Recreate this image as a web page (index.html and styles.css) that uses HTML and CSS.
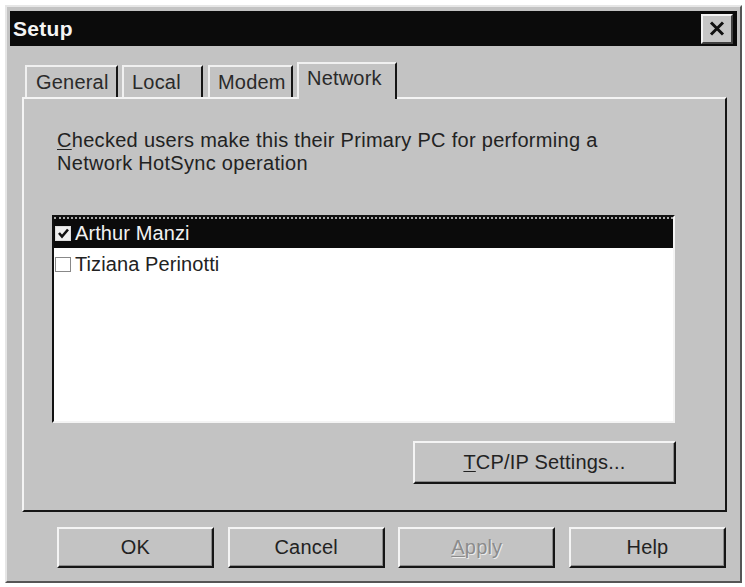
FILE: index.html
```html
<!DOCTYPE html>
<html>
<head>
<meta charset="utf-8">
<link rel="stylesheet" href="styles.css">
</head>
<body>
<div class="dialog">
  <div class="titlebar">
    <span class="title">Setup</span>
    <div class="close">
      <svg width="16" height="15" viewBox="0 0 16 15"><path d="M2 1.5 L14 13.5 M14 1.5 L2 13.5" stroke="#111" stroke-width="3" fill="none"/></svg>
    </div>
  </div>
  <div class="body">
    <div class="tabs">
      <div class="tab t-general">General</div>
      <div class="tab t-local">Local</div>
      <div class="tab t-modem">Modem</div>
      <div class="tab t-network active">Network</div>
    </div>
    <div class="panel">
      <p class="desc"><u>C</u>hecked users make this their Primary PC for performing a<br>Network HotSync operation</p>
      <div class="listbox">
        <div class="row sel">
          <span class="cb checked"><svg width="13" height="13" viewBox="0 0 13 13"><path d="M2 6 L5 9.5 L11 2.5" stroke="#111" stroke-width="2.6" fill="none"/></svg></span>
          <span>Arthur Manzi</span>
        </div>
        <div class="row">
          <span class="cb"></span>
          <span>Tiziana Perinotti</span>
        </div>
      </div>
      <div class="btn-row">
        <div class="btn tcp"><span><u>T</u>CP/IP Settings...</span></div>
      </div>
    </div>
    <div class="footer">
      <div class="btn">OK</div>
      <div class="btn">Cancel</div>
      <div class="btn disabled"><span><u>A</u>pply</span></div>
      <div class="btn">Help</div>
    </div>
  </div>
</div>
</body>
</html>
```
FILE: styles.css
```css
body {
  margin: 0;
  background: #fff;
  font-family: "Liberation Sans", Arial, sans-serif;
}
.dialog {
  margin: 5px 0 0 5px;
  width: 737px;
  box-sizing: border-box;
  background: #c3c3c3;
  border: 2px solid;
  border-color: #e6e6e6 #555 #555 #e6e6e6;
  padding: 4px 3px 13px;
}
.titlebar {
  height: 35px;
  background: #0b0b0b;
  display: flex;
  align-items: center;
  justify-content: space-between;
  padding: 0 4px 0 3px;
}
.title {
  color: #f4f4f4;
  font-weight: bold;
  font-size: 21px;
  letter-spacing: 0.3px;
}
.close {
  width: 32px;
  height: 30px;
  box-sizing: border-box;
  background: #c6c6c6;
  border: 2px solid;
  border-color: #f4f4f4 #404040 #404040 #f4f4f4;
  display: flex;
  align-items: center;
  justify-content: center;
}
.body {
  padding: 16px 10px 0 12px;
}
.tabs {
  display: flex;
  align-items: flex-end;
  padding-left: 3px;
  height: 35px;
}
.tab {
  height: 32px;
  box-sizing: border-box;
  border: 2px solid;
  border-bottom: none;
  border-color: #f0f0f0 #151515 transparent #f0f0f0;
  padding-left: 8px;
  font-size: 20px;
  color: #2a2a2a;
  display: flex;
  align-items: center;
  letter-spacing: 0.2px;
}
.t-general { width: 93px; padding-left: 9px; }
.t-local { width: 81px; margin-left: 4px; }
.t-modem { width: 85px; margin-left: 5px; }
.t-network { width: 100px; margin-left: 4px; }
.tab.active {
  height: 37px;
  margin-bottom: -2px;
  position: relative;
  background: #c3c3c3;
  align-items: flex-start;
  padding-top: 3px;
  line-height: 23px;
}
.panel {
  border: 2px solid;
  border-color: #f4f4f4 #151515 #151515 #f4f4f4;
  padding: 30px 50px 26px 28px;
}
.desc {
  font-size: 20px;
  line-height: 23px;
  margin: 0 0 40px 5px;
  letter-spacing: 0.3px;
  white-space: nowrap;
  color: #222;
}
u {
  text-decoration-thickness: 1px;
  text-underline-offset: 2px;
}
.listbox {
  height: 208px;
  box-sizing: border-box;
  background: #fff;
  border: 2px solid;
  border-color: #111 #f4f4f4 #f4f4f4 #111;
}
.row {
  height: 32px;
  box-sizing: border-box;
  display: flex;
  align-items: center;
  padding-left: 1px;
  font-size: 20px;
  color: #222;
  letter-spacing: 0.1px;
}
.row.sel {
  height: 31px;
  background: #0b0b0b;
  color: #f2f2f2;
  border-top: 2px dotted #aaa;
}
.cb {
  width: 16px;
  height: 15px;
  box-sizing: border-box;
  border: 1px solid #888;
  background: #fff;
  margin-right: 4px;
  display: flex;
  align-items: center;
  justify-content: center;
}
.cb.checked {
  background: #f0f0f0;
  border-color: #ddd;
}
.btn-row {
  display: flex;
  justify-content: flex-end;
  margin-top: 18px;
  margin-right: -1px;
}
.btn {
  box-sizing: border-box;
  height: 41px;
  background: #c3c3c3;
  border: 2px solid;
  border-color: #f4f4f4 #151515 #151515 #f4f4f4;
  box-shadow: inset -1px -1px #8a8a8a;
  font-size: 20px;
  color: #222;
  display: flex;
  align-items: center;
  justify-content: center;
  letter-spacing: 0.2px;
}
.btn.tcp {
  width: 263px;
  height: 43px;
}
.btn.disabled {
  color: #8c8c8c;
  text-shadow: 1px 1px #ececec;
}
.footer {
  display: grid;
  grid-template-columns: repeat(4, 157px);
  column-gap: 13.67px;
  margin-top: 15px;
  padding-left: 35px;
}
```
